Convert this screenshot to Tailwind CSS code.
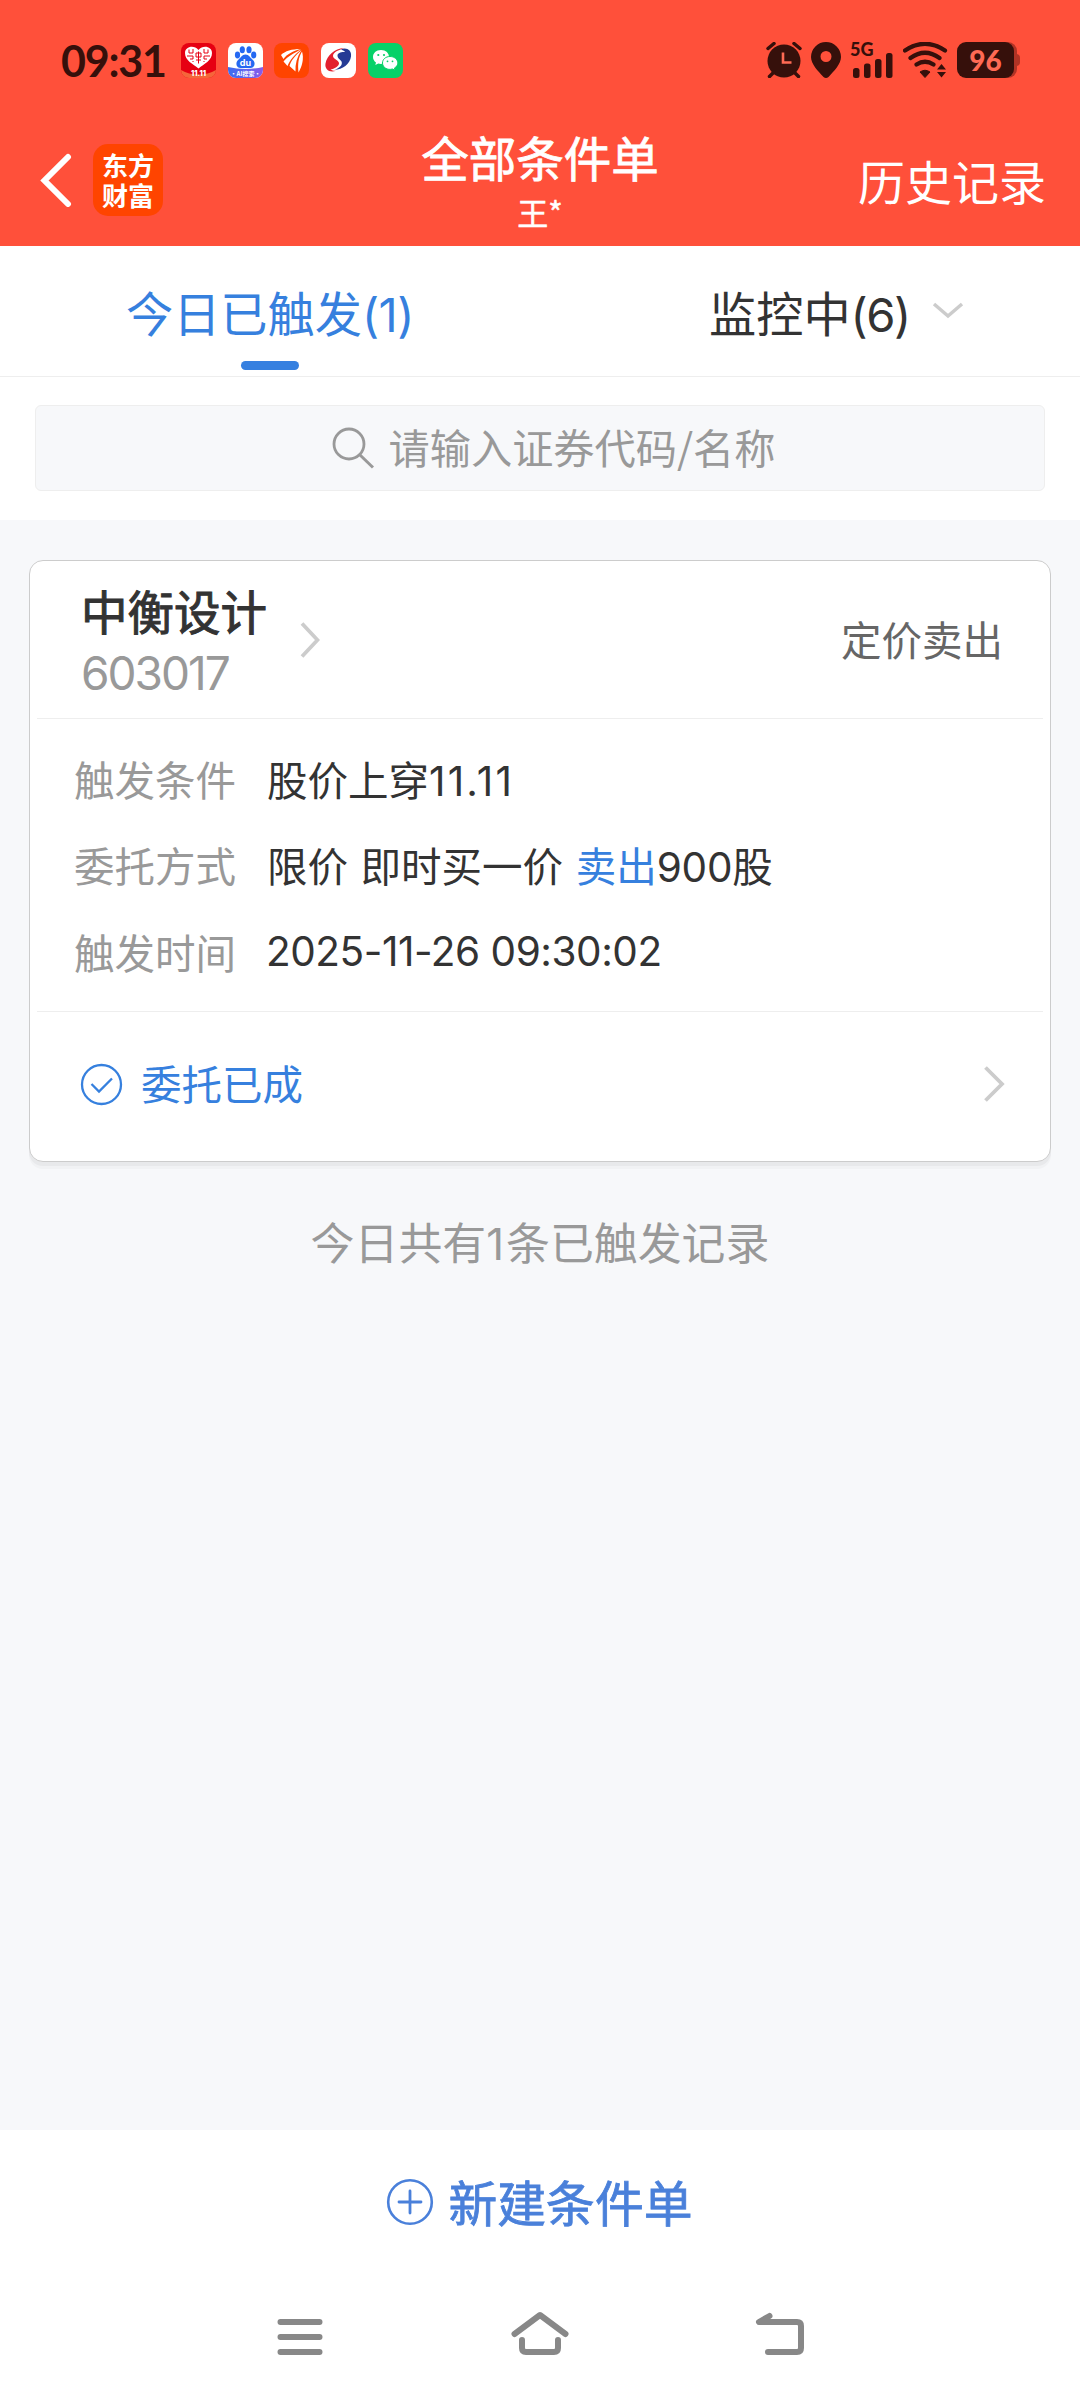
<!DOCTYPE html>
<html lang="zh-CN">

<head>
    <meta charset="UTF-8">
    <meta name="viewport" content="width=device-width, initial-scale=1.0">
    <title>全部条件单</title>
    <script src="https://cdn.jsdelivr.net/npm/@tailwindcss/browser@4"></script>
</head>

<body class="w-[1080px] h-[2400px] flex flex-col overflow-hidden bg-[#f7f8fa] font-['Noto_Sans_CJK_SC',sans-serif] text-[#333333]">
    <!-- Header -->
    <header class="h-[246px] shrink-0 bg-[#ff503a]">
        <!-- Status Bar -->
        <div class="h-[120px] pl-[61px] pr-[60px] flex items-center justify-between text-[#36100b]">
            <div class="flex items-center">
                <span class="w-[120px] font-['Lato',sans-serif] font-bold text-[43px] leading-none tracking-[-1.2px]">09:31</span>
                <div class="flex items-center gap-[11.7px]">
                    <!-- 11.11 shop -->
                    <svg class="w-[35px] h-[35px]" viewBox="0 0 35 35">
                        <rect width="35" height="35" rx="8" fill="#e60012" />
                        <path d="M0 27C10 33 25 33 35 27A8 8 0 0 1 27 35H8A8 8 0 0 1 0 27Z" fill="#f5663a" />
                        <path d="M17.500 25.500C12 21 4 17.500 4 10C4 3.500 13 1.500 17.500 7C22 1.500 31 3.500 31 10C31 17.500 23 21 17.500 25.500Z" fill="#fff" />
                        <path d="M8 6.500v3.500h4V6M23 6v4h4V6.500M6 13h6v3H9M29 13h-6v3h3M15 10h5v4h-5ZM15 17h5M17.500 8.500v12M12 19v-1M23 19v-1" fill="none" stroke="#e60012" stroke-width="1" />
                        <text x="17.500" y="33" text-anchor="middle" font-family="Inter" font-weight="800" font-size="7.500" fill="#fff">11.11</text>
                    </svg>
                    <!-- Baidu -->
                    <svg class="w-[35px] h-[35px]" viewBox="0 0 35 35">
                        <defs>
                            <linearGradient id="baidu" x1="0" x2="1">
                                <stop offset="0" stop-color="#3a6df0" />
                                <stop offset="1" stop-color="#8a5be8" />
                            </linearGradient>
                        </defs>
                        <rect width="35" height="35" rx="8" fill="#fff" />
                        <path d="M0 24Q17.500 28 35 24V27A8 8 0 0 1 27 35H8A8 8 0 0 1 0 27Z" fill="url(#baidu)" />
                        <g fill="#2468f2">
                            <ellipse cx="9.500" cy="12" rx="2.600" ry="3.400" />
                            <ellipse cx="14.300" cy="6.800" rx="2.600" ry="3.500" />
                            <ellipse cx="21" cy="6.800" rx="2.600" ry="3.500" />
                            <ellipse cx="25.700" cy="12" rx="2.600" ry="3.400" />
                            <path d="M17.500 11.500C21 11.500 22.500 15 25 17C28 20 26.500 25 22.500 25H12.500C8.500 25 7 20 10 17C12.500 15 14 11.500 17.500 11.500Z" />
                        </g>
                        <text x="17.500" y="23" text-anchor="middle" font-family="Inter" font-weight="700" font-size="9" fill="#fff">du</text>
                        <text x="17.500" y="32.800" text-anchor="middle" font-family="Noto Sans CJK SC" font-weight="700" font-size="6" fill="#fff">·AI搜索·</text>
                    </svg>
                    <!-- East Money -->
                    <svg class="w-[35px] h-[35px]" viewBox="0 0 35 35">
                        <rect width="35" height="35" rx="8" fill="#ff4400" />
                        <g fill="#fff">
                            <path d="M26.500 6C18 6 11 8 7 12L9.500 16C13 11 19 8 26.500 6Z" />
                            <path d="M27 6.500C20 10 13.500 13.500 9.500 18.500L13.500 23C16 16.500 21 11.500 27 6.500Z" />
                            <path d="M27.500 7C21 13 17 17.500 15.500 23L21.500 28.500C21 21 23 14 27.500 7Z" />
                            <path d="M28 8.500C24.500 14 23.500 21 24.500 29.500C28.500 22.500 30 15 28 8.500Z" />
                        </g>
                    </svg>
                    <!-- Brokerage swirl -->
                    <svg class="w-[35px] h-[35px]" viewBox="0 0 35 35">
                        <rect width="35" height="35" rx="8" fill="#fff" />
                        <path d="M20 6.500C25 4 31 7 30 13.500C29 21 21.500 26.500 13.500 27C18.500 25 22 22 20.500 18.500C19.500 16.500 16.500 15.500 16.500 12.500C16.500 10 20.500 8.500 24 9C23 7.500 21.500 7 20 6.500Z" fill="#253b95" />
                        <path d="M23 5C19 7 12 8.500 12 13C12 16 17.500 17 18 20C18.500 23 13 26 9.500 26.500C11 27.500 13 28 15 27.800C8.500 30 3.500 26.500 4.500 20.500C6 12.500 13.500 5.500 23 5Z" fill="#e3202f" />
                    </svg>
                    <!-- WeChat -->
                    <svg class="w-[35px] h-[35px]" viewBox="0 0 35 35">
                        <rect width="35" height="35" rx="8" fill="#07d168" />
                        <path d="M13 7C8 7 5 10.300 5 14C5 16.300 6.200 18.200 8 19.500L7.300 22L10.300 20.600C15 22 21 19 21 14C21 10.300 18 7 13 7Z" fill="#fff" />
                        <path d="M22 13.500C17.500 13.500 14.500 16.500 14.500 20C14.500 24.500 19.500 27.500 24.500 26L27 27.200L26.500 25C33 21 29 13.500 22 13.500Z" fill="#fff" stroke="#07d168" stroke-width="1" />
                        <g fill="#07d168">
                            <circle cx="10.300" cy="12" r="1.100" />
                            <circle cx="16" cy="12" r="1.100" />
                            <circle cx="19.500" cy="18.300" r="0.900" />
                            <circle cx="24.500" cy="18.300" r="0.900" />
                        </g>
                    </svg>
                </div>
            </div>
            <div class="flex items-center">
                <!-- Alarm -->
                <svg class="w-9 h-9" viewBox="0 0 36 36">
                    <circle cx="18" cy="19" r="16.500" fill="currentColor" />
                    <path d="M2 6.500L8 1.500M34 6.500L28 1.500" stroke="#ff503a" stroke-width="6" />
                    <path d="M2 6.500L8 1.500M34 6.500L28 1.500M3.500 34.500L8 30M32.500 34.500L28 30" stroke="currentColor" stroke-width="3.500" stroke-linecap="round" />
                    <path d="M17 10.500V20.500H25.500" fill="none" stroke="#ff6a54" stroke-width="2.600" />
                </svg>
                <!-- Location -->
                <svg class="w-[30px] h-9 ml-[9px]" viewBox="0 0 30 36">
                    <path fill="currentColor" fill-rule="evenodd"
                        d="M15 0A15 15 0 0 0 0 15C0 22 7 29 12.500 35Q15 37 17.500 35C23 29 30 22 30 15A15 15 0 0 0 15 0ZM15 9A5.500 5.500 0 1 1 15 20A5.500 5.500 0 0 1 15 9Z" />
                </svg>
                <!-- Signal -->
                <svg class="w-[44px] h-9 ml-[9px] overflow-visible" viewBox="0 0 44 36" fill="currentColor">
                    <text x="0" y="13.500" font-family="Lato" font-weight="900" font-size="18">5G</text>
                    <rect x="3" y="26" width="6.500" height="10" rx="2.500" />
                    <rect x="14" y="21.500" width="6.500" height="14.500" rx="2.500" />
                    <rect x="25" y="17" width="6.500" height="19" rx="2.500" />
                    <rect x="36" y="11" width="6.500" height="25" rx="2.500" />
                </svg>
                <!-- Wifi -->
                <svg class="w-[45px] h-9 ml-[9px]" viewBox="0 0 45 36">
                    <path d="M2 8.500Q22 -5 42 8.500M7.500 16Q22 5.500 36.500 16M13.500 22.500Q22 17 30.500 22.500" fill="none" stroke="currentColor" stroke-width="4.200" stroke-linecap="round" />
                    <path d="M17 30Q22 26.500 27 30L22 35.500Z" fill="currentColor" stroke="currentColor" stroke-linejoin="round" />
                    <path d="M34 27.500L38.500 22L43 27.500ZM34 30L38.500 35.500L43 30Z" fill="currentColor" />
                </svg>
                <!-- Battery -->
                <div class="ml-[9px] w-[63px] h-9 relative flex items-center">
                    <div class="absolute left-3 top-0 w-[48px] h-9 rounded-[9px] bg-[#b03325]"></div>
                    <div class="absolute right-0 top-3 w-[6px] h-3 rounded-r bg-[#b03325]"></div>
                    <div class="relative w-[57px] h-9 rounded-[9px] bg-[#36100b] flex items-center justify-center font-['Lato',sans-serif] font-black text-[28px] leading-none text-[#ff6a54]">96</div>
                </div>
            </div>
        </div>

        <!-- Title Bar -->
        <div class="h-[126px] grid grid-cols-3 items-start px-[35px]">
            <div class="flex items-center pt-6 pl-[5px]">
                <svg class="w-[32px] h-[54px]" viewBox="0 0 32 54">
                    <path d="M28 4L4.500 27.500L28 51" fill="none" stroke="#fff" stroke-width="6" stroke-linecap="round" stroke-linejoin="miter" />
                </svg>
                <div class="ml-[21px] w-[70px] h-[72px] rounded-[15px] bg-[#ff4400] flex flex-col items-center justify-center text-white font-bold text-[26px] leading-[30px]">
                    <span>东方</span>
                    <span>财富</span>
                </div>
            </div>
            <div class="text-center text-white">
                <h1 class="text-[47.500px] leading-[60px] pt-[7px] [-webkit-text-stroke:0.8px_white]">全部条件单</h1>
                <p class="text-[31px] leading-[36px] pt-[7px] [-webkit-text-stroke:0.5px_white]">王*</p>
            </div>
            <a class="text-right text-white text-[47px] leading-[60px] pt-[30px] -mr-px">历史记录</a>
        </div>
    </header>

    <!-- Tabs -->
    <nav class="h-[131px] shrink-0 bg-white border-b border-[#eeeeee] grid grid-cols-2 text-[47.200px]">
        <div class="flex flex-col items-center text-[#3680de]">
            <span class="h-[115px] leading-[131px]">今日已触发<span class="font-['Inter',sans-serif] tracking-[-0.5px]">(1)</span></span>
            <span class="w-[58px] h-[9px] rounded-full bg-[#3680e0]"></span>
        </div>
        <div class="flex pl-[169px]">
            <span class="leading-[131px]">监控中<span class="font-['Inter',sans-serif] tracking-[-1.500px]">(6)</span></span>
            <svg class="w-[32px] h-[17px] ml-[22px] mt-[56px]" viewBox="0 0 32 17">
                <path d="M2 2L16 14L30 2" fill="none" stroke="#cccccc" stroke-width="3.500" />
            </svg>
        </div>
    </nav>

    <!-- Search -->
    <div class="h-[143px] shrink-0 bg-white px-[35px] pt-[28px]">
        <div class="h-[86px] rounded-md border border-[#eeeeee] bg-[#f7f8fa] flex items-center justify-center pl-[27px] text-[41.200px] text-[#999999]">
            <svg class="w-[42px] h-[42px] mr-[15px]" viewBox="0 0 42 42">
                <circle cx="17" cy="17" r="15" fill="none" stroke="#999999" stroke-width="2.800" />
                <path d="M27.500 27.500L41 40.500" stroke="#999999" stroke-width="3" />
            </svg>
            <span class="leading-[80px] pb-[4px]">请输入证券代码/名称</span>
        </div>
    </div>

    <!-- Order List -->
    <main class="flex-1 pt-[40px] px-[29px]">
        <section class="h-[602px] rounded-[14px] border border-[#cccccc] bg-white px-[7px] shadow-[0_4px_0_#e8e9eb,0_7px_0_#f1f2f4]">
            <div class="h-[158px] border-b border-[#eeeeee] pl-[44px] pr-[40px] flex items-center justify-between">
                <div class="flex items-center">
                    <div class="w-[219px]">
                        <h2 class="text-[46.500px] leading-[60px] [-webkit-text-stroke:1px_#333333]">中衡设计</h2>
                        <p class="font-['Inter',sans-serif] text-[46px] leading-[54px] pt-[6px] tracking-[-2px] text-[#999999]">603017</p>
                    </div>
                    <svg class="w-[20px] h-[36px]" viewBox="0 0 20 36">
                        <path d="M2 1.500L17.500 18L2 34.500" fill="none" stroke="#cccccc" stroke-width="3.800" />
                    </svg>
                </div>
                <span class="text-[40.500px] text-[#666666]">定价卖出</span>
            </div>
            <div class="h-[293px] border-b border-[#eeeeee] pl-[37px] pt-[17px] text-[40.500px] leading-[86.400px]">
                <div class="flex h-[86.400px]">
                    <span class="w-[193px] text-[#999999]">触发条件</span>
                    <span>股价上穿<span class="font-['Inter',sans-serif] tracking-[2.200px]">11.11</span></span>
                </div>
                <div class="flex h-[86.400px]">
                    <span class="w-[193px] text-[#999999]">委托方式</span>
                    <span class="[word-spacing:3.500px]">限价 即时买一价 <span class="text-[#3680de]">卖出</span><span class="font-['Inter',sans-serif] tracking-[-0.2px]">900</span>股</span>
                </div>
                <div class="flex h-[86.400px]">
                    <span class="w-[192px] text-[#999999]">触发时间</span>
                    <span class="font-['Inter',sans-serif] tracking-[-0.460px]">2025-11-26 09:30:02</span>
                </div>
            </div>
            <div class="h-[144px] pl-[43px] pr-[38px] flex items-center justify-between">
                <div class="flex items-center text-[#3680de]">
                    <svg class="w-[43px] h-[43px] mr-[18px]" viewBox="0 0 43 43">
                        <circle cx="21.500" cy="21.500" r="19.500" fill="none" stroke="currentColor" stroke-width="2.300" />
                        <path d="M11.500 21L19 28.500L32 15.500" fill="none" stroke="currentColor" stroke-width="2.300" />
                    </svg>
                    <span class="text-[40.500px] leading-[60px] pb-[2px]">委托已成</span>
                </div>
                <svg class="w-[22px] h-[38px]" viewBox="0 0 22 38">
                    <path d="M2.500 2.500L19 19L2.500 35.500" fill="none" stroke="#cccccc" stroke-width="3.800" />
                </svg>
            </div>
        </section>
        <p class="mt-[46px] text-center text-[43.900px] leading-[66px] text-[#999999]">今日共有<span class="font-['Inter',sans-serif] tracking-[2px]">1</span>条已触发记录</p>
    </main>

    <!-- New Order -->
    <footer class="h-[270px] shrink-0 bg-white">
        <div class="h-[144px] flex items-center justify-center pr-[2px] text-[48.800px] text-[#4a80da]">
            <svg class="w-[48px] h-[48px] mr-[15px]" viewBox="0 0 48 48">
                <circle cx="24" cy="24" r="21.800" fill="none" stroke="currentColor" stroke-width="2.600" />
                <path d="M24 13V35M13 24H35" stroke="currentColor" stroke-width="2.800" stroke-linecap="round" />
            </svg>
            <span class="leading-[72px] pb-[2px] [-webkit-text-stroke:0.8px_#4a80da]">新建条件单</span>
        </div>

        <!-- System Navigation -->
        <div class="h-[126px] px-[270px] pt-[33px] flex justify-between text-[#888888]">
            <svg class="w-[60px] h-[60px]" viewBox="270 2307 60 60" fill="none" stroke="currentColor" stroke-width="6" stroke-linecap="round">
                <path d="M280.500 2322H319.500M280.500 2337H319.500M280.500 2352H319.500" />
            </svg>
            <svg class="w-[60px] h-[60px]" viewBox="510 2307 60 60" fill="none" stroke="currentColor" stroke-width="6" stroke-linecap="round" stroke-linejoin="round">
                <path d="M514.500 2334L540 2315L565.500 2334M522 2340V2348Q522 2352 526 2352H554Q558 2352 558 2348V2340" />
            </svg>
            <svg class="w-[60px] h-[60px]" viewBox="750 2307 60 60" fill="none" stroke="currentColor" stroke-width="6" stroke-linecap="round" stroke-linejoin="round">
                <path d="M769.500 2316L759 2322H797Q801 2322 801 2326V2348Q801 2352 797 2352H768" />
            </svg>
        </div>
    </footer>
</body>

</html>
